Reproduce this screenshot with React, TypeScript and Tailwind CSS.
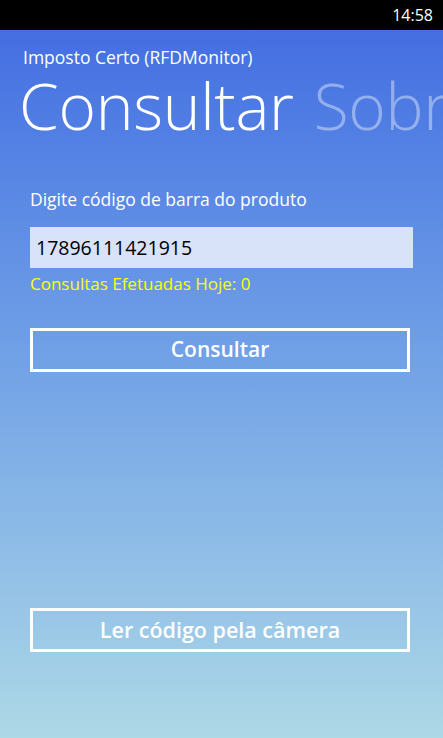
export default function App() {
  return (
    <div className="w-[443px] h-[738px] flex flex-col overflow-hidden font-['Open_Sans',sans-serif] bg-gradient-to-b from-[#4169e1] to-[#add8e6] text-white">
      {/* status bar */}
      <div className="h-[30px] bg-black flex items-center justify-end pr-[10px] text-[16px] leading-none">
        14:58
      </div>

      {/* pivot header */}
      <div className="pl-[23px] pt-[16px] text-[17.5px] leading-[22px]">Imposto Certo (RFDMonitor)</div>
      <div className="pl-[19px] flex gap-[20px] whitespace-nowrap overflow-hidden text-[64px] leading-[76px] font-light tracking-[-0.3px]">
        <span>Consultar</span>
        <span className="text-white/40">Sobre</span>
      </div>

      {/* form */}
      <div className="px-[30px] pt-[42px] flex flex-col">
        <label className="text-[17.5px] leading-[26px]">Digite código de barra do produto</label>
        <div className="mt-[15px] h-[41px] bg-[#d8e2f8] flex items-center px-[6px] text-black text-[19.5px]">
          17896111421915
        </div>
        <div className="mt-[4px] text-[17px] leading-[24px] text-[#ffff00]">Consultas Efetuadas Hoje: 0</div>
        <button className="mt-[32px] h-[44px] w-[380px] border-[3px] border-white text-[21px] font-semibold">
          Consultar
        </button>
      </div>

      <div className="flex-1" />

      <div className="px-[30px] pb-[86px]">
        <button className="h-[44px] w-[380px] border-[3px] border-white text-[21.5px] font-semibold">
          Ler código pela câmera
        </button>
      </div>
    </div>
  );
}
